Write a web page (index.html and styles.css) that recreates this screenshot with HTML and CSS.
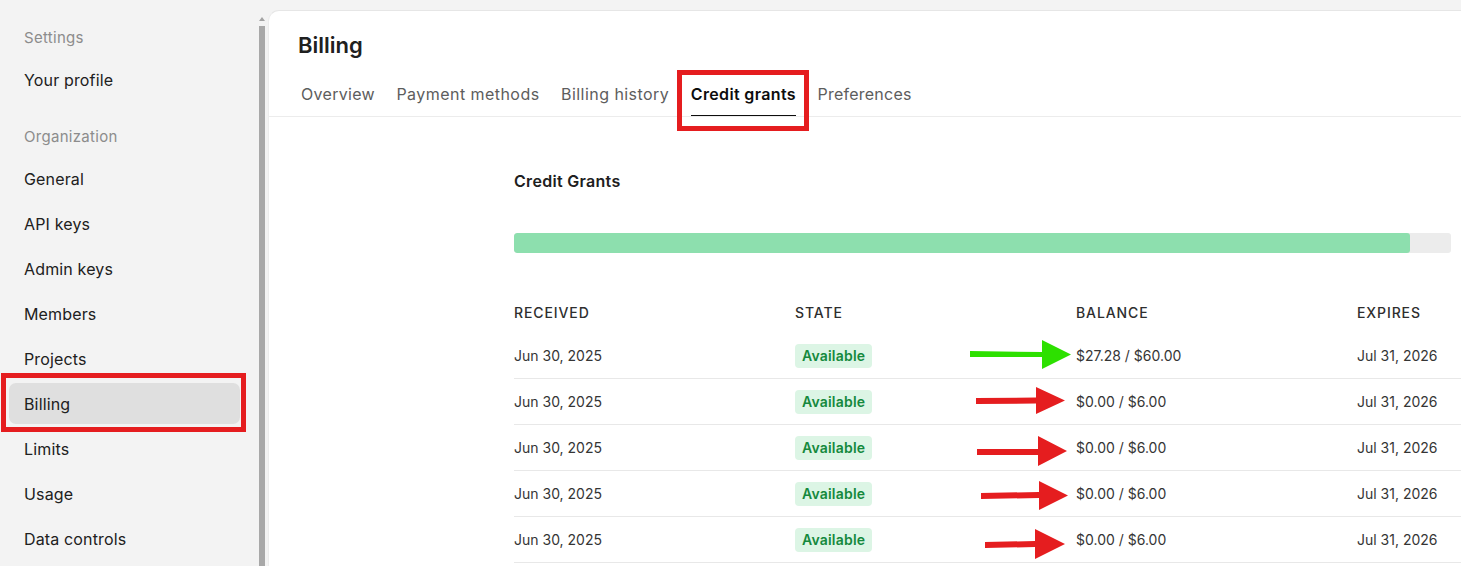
FILE: index.html
```html
<!DOCTYPE html>
<html lang="en">
<head>
<meta charset="utf-8">
<title>Billing – Credit grants</title>
<link rel="stylesheet" href="styles.css">
</head>
<body>
<div class="app">
  <nav class="sidebar">
    <div class="nav-label">Settings</div>
    <a class="nav-item">Your profile</a>
    <div class="nav-label section">Organization</div>
    <a class="nav-item">General</a>
    <a class="nav-item">API keys</a>
    <a class="nav-item">Admin keys</a>
    <a class="nav-item">Members</a>
    <a class="nav-item">Projects</a>
    <a class="nav-item active">Billing</a>
    <a class="nav-item">Limits</a>
    <a class="nav-item">Usage</a>
    <a class="nav-item">Data controls</a>
  </nav>
  <div class="scrollbar">
    <div class="scroll-arrow"></div>
    <div class="scroll-thumb"></div>
  </div>
  <main class="panel">
    <header class="panel-head">
      <h1 class="title">Billing</h1>
      <div class="tabs">
        <span class="tab">Overview</span>
        <span class="tab">Payment methods</span>
        <span class="tab">Billing history</span>
        <span class="tab active">Credit grants</span>
        <span class="tab">Preferences</span>
      </div>
    </header>
    <section class="content">
      <h2 class="section-title">Credit Grants</h2>
      <div class="progress"><div class="progress-fill"></div></div>
      <table class="grants">
        <thead>
          <tr><th>Received</th><th>State</th><th>Balance</th><th>Expires</th></tr>
        </thead>
        <tbody>
          <tr><td>Jun 30, 2025</td><td><span class="badge">Available</span></td><td>$27.28 / $60.00</td><td>Jul 31, 2026</td></tr>
          <tr><td>Jun 30, 2025</td><td><span class="badge">Available</span></td><td>$0.00 / $6.00</td><td>Jul 31, 2026</td></tr>
          <tr><td>Jun 30, 2025</td><td><span class="badge">Available</span></td><td>$0.00 / $6.00</td><td>Jul 31, 2026</td></tr>
          <tr><td>Jun 30, 2025</td><td><span class="badge">Available</span></td><td>$0.00 / $6.00</td><td>Jul 31, 2026</td></tr>
          <tr><td>Jun 30, 2025</td><td><span class="badge">Available</span></td><td>$0.00 / $6.00</td><td>Jul 31, 2026</td></tr>
        </tbody>
      </table>
    </section>
  </main>
</div>
<svg class="annotations" width="1461" height="566" viewBox="0 0 1461 566" aria-hidden="true">
  <rect class="ann-box" x="679.5" y="72.5" width="127" height="56"/>
  <rect class="ann-box" x="3.5" y="375.5" width="240" height="54"/>
  <polygon class="ann-green" points="970,351 1042,352 1042,340 1071,354.5 1042,369 1042,357 970,357"/>
  <polygon class="ann-red" points="976,398 1036,397.5 1036,387 1065,400.5 1036,414 1036,403.5 976,404"/>
  <polygon class="ann-red" points="977,449 1038,449 1038,436 1067,451 1038,466 1038,455 977,455"/>
  <polygon class="ann-red" points="981,493 1039,492 1039,481 1068,495.5 1039,510 1039,498 981,499"/>
  <polygon class="ann-red" points="985,542 1035,541 1035,529 1065,544 1035,559 1035,547 985,548"/>
</svg>
</body>
</html>
```
FILE: styles.css
```css
* { box-sizing: border-box; }
html, body {
  margin: 0;
  height: 566px;
  overflow: hidden;
  background: #f3f3f3;
  font-family: Inter, "Noto Sans", "Liberation Sans", sans-serif;
  color: #202020;
}
.app {
  display: flex;
  height: 566px;
}
.sidebar {
  width: 258px;
  flex: none;
  padding: 28px 18px 0 9px;
  display: flex;
  flex-direction: column;
  gap: 4px;
}
.nav-label {
  font-size: 15px;
  line-height: 20px;
  letter-spacing: 0.3px;
  color: #8c8c8c;
  padding-left: 15px;
  margin-bottom: 7px;
}
.nav-label.section { margin-top: 23px; }
.nav-item {
  display: flex;
  align-items: center;
  height: 41px;
  padding-left: 15px;
  font-size: 16px;
  letter-spacing: 0.15px;
  color: #202020;
  border-radius: 7px;
}
.nav-item.active { background: #dfdfdf; }
.scrollbar {
  width: 10px;
  flex: none;
  display: flex;
  flex-direction: column;
  align-items: flex-start;
  padding: 17px 0 0 1px;
}
.scroll-arrow {
  width: 0;
  height: 0;
  border-left: 3px solid transparent;
  border-right: 3px solid transparent;
  border-bottom: 4px solid #a3a3a3;
}
.scroll-thumb {
  margin-top: 5px;
  width: 6px;
  flex: 1;
  background: #a8a8a8;
}
.panel {
  flex: 1;
  margin-top: 10px;
  background: #fff;
  border-top-left-radius: 11px;
  border-top: 1px solid #e6e6e6;
  border-left: 1px solid #ececec;
  overflow: hidden;
  min-width: 0;
}
.panel-head {
  padding: 20px 0 0 29px;
  border-bottom: 1px solid #ececec;
}
.title {
  margin: 0;
  font-size: 22px;
  line-height: 28px;
  font-weight: 600;
  color: #202020;
}
.tabs {
  display: flex;
  gap: 21.5px;
  margin-top: 23px;
  padding-left: 3px;
}
.tab {
  font-size: 16px;
  line-height: 24px;
  letter-spacing: 0.45px;
  color: #5d5d5d;
  padding-bottom: 9px;
  border-bottom: 1px solid transparent;
  white-space: nowrap;
}
.tab:first-child { letter-spacing: 0.3px; }
.tab.active {
  color: #0d0d0d;
  font-weight: 600;
  letter-spacing: 0.35px;
  border-bottom-color: #0d0d0d;
}
.tab:last-child { letter-spacing: 0.25px; }
.content {
  padding: 52px 0 0 245px;
}
.section-title {
  margin: 0;
  font-size: 16px;
  line-height: 24px;
  font-weight: 600;
  letter-spacing: 0.3px;
  color: #202020;
}
.progress {
  margin-top: 40px;
  width: 937px;
  height: 20px;
  background: #ececec;
  border-radius: 3px;
  overflow: hidden;
}
.progress-fill {
  width: 896px;
  height: 100%;
  background: #8ddfae;
  border-radius: 3px;
}
.grants {
  margin-top: 49px;
  border-collapse: collapse;
  width: 1124px;
  table-layout: fixed;
  font-size: 14px;
  color: #353535;
}
.grants th {
  text-align: left;
  text-transform: uppercase;
  font-weight: 500;
  font-size: 14px;
  line-height: 20px;
  letter-spacing: 0.9px;
  color: #2e2e2e;
  padding: 1px 0 9px 0;
  width: 281px;
}
.grants td {
  height: 46px;
  padding: 2px 0 0 0;
  border-bottom: 1px solid #e8e8e8;
  vertical-align: middle;
  line-height: 20px;
}
.grants td:first-child { padding-left: 0; }
.badge {
  display: inline-block;
  background: #dcf5e5;
  color: #15893d;
  font-weight: 600;
  font-size: 14px;
  line-height: 24px;
  letter-spacing: 0.2px;
  padding: 0 7px;
  border-radius: 4px;
}
.annotations {
  position: absolute;
  left: 0;
  top: 0;
  pointer-events: none;
}
.ann-box {
  fill: none;
  stroke: #e51d1f;
  stroke-width: 5;
}
.ann-green { fill: #2de000; }
.ann-red { fill: #e51d1f; }
```
